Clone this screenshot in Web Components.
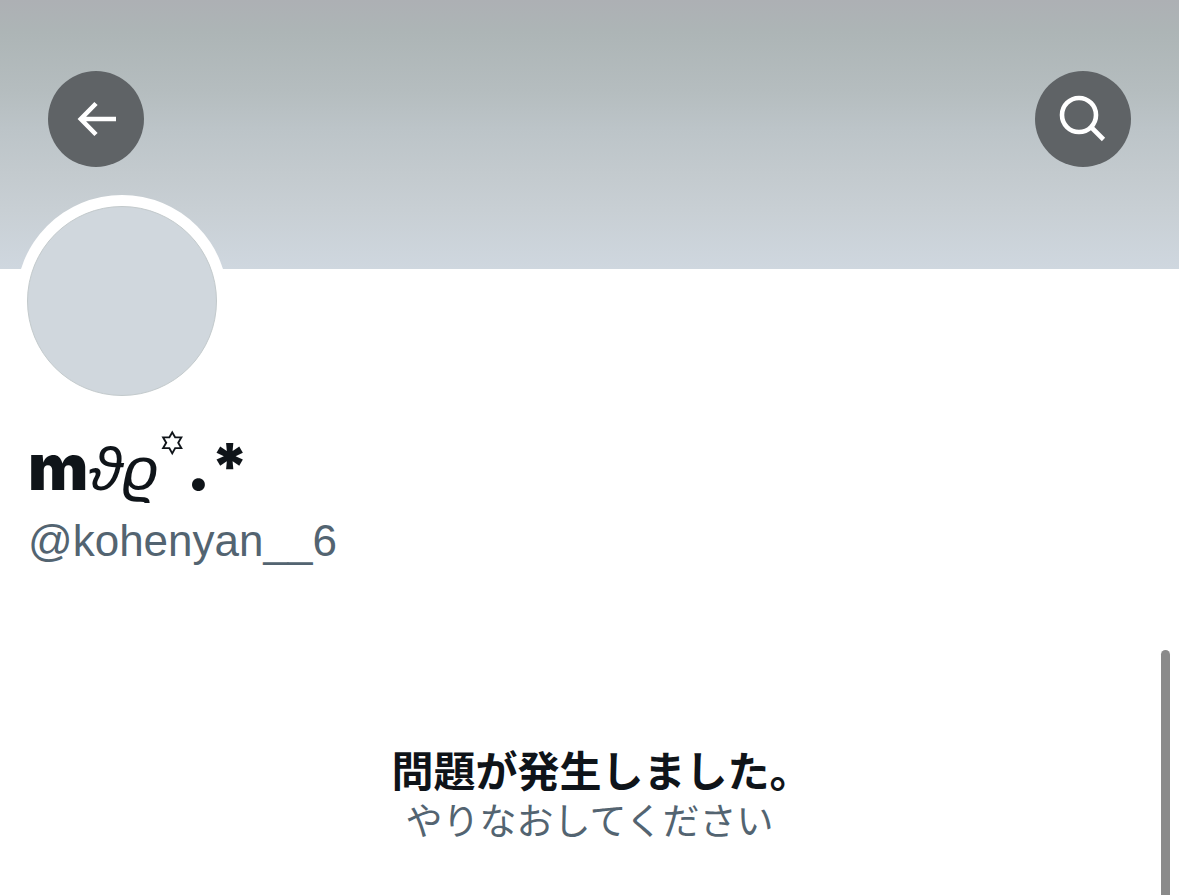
<!DOCTYPE html>
<html lang="ja">
<head>
<meta charset="utf-8">
<meta name="viewport" content="width=device-width, initial-scale=1">
<title>Profile</title>
<style>
  html {
    height: 100%;
  }
  body {
    margin: 0;
    height: 100%;
    overflow: hidden;
    background-color: #fff;
    color: #0f1419;
    font-family: Inter, "Noto Sans CJK JP", sans-serif;
  }
</style>
</head>
<body>
<profile-page></profile-page>

<script>
class IconButton extends HTMLElement {
  constructor () {
    super()
    this.shadowDOM = this.attachShadow({ mode: 'open' })
  }

  connectedCallback () {
    this.shadowDOM.innerHTML = `
      <style>
        :host {
          display: block;
        }
        button {
          display: flex;
          align-items: center;
          justify-content: center;
          width: 96px;
          height: 96px;
          padding: 0;
          border: 0;
          border-radius: 50%;
          background-color: #5f6366;
          color: #fff;
          cursor: pointer;
        }
      </style>
      <button type="button" aria-label="${this.getAttribute('label')}"><slot></slot></button>
    `
  }
}

customElements.define('icon-button', IconButton)

class ProfileBanner extends HTMLElement {
  constructor () {
    super()
    this.shadowDOM = this.attachShadow({ mode: 'open' })
  }

  connectedCallback () {
    this.shadowDOM.innerHTML = `
      <style>
        :host {
          display: flex;
          justify-content: space-between;
          align-items: flex-start;
          box-sizing: border-box;
          height: 269px;
          padding: 71px 48px 0;
          background: linear-gradient(#adb0b4, #adb5b6 12%, #b5bdbf 34%, #bcc4c8 48%, #c3cace 64%, #c8cfd4 78%, #cfd7df);
        }
        svg {
          display: block;
          fill: none;
          stroke: currentColor;
        }
      </style>
      <icon-button label="戻る">
        <svg width="60" height="60" viewBox="0 0 60 60" stroke-width="4.6">
          <path d="M50 30H15M30 14.5L14.8 30L30 45.5"/>
        </svg>
      </icon-button>
      <icon-button label="検索">
        <svg width="60" height="60" viewBox="0 0 60 60" stroke-width="4.6">
          <circle cx="26" cy="26" r="17"/>
          <path d="M38 38L50.5 50.5"/>
        </svg>
      </icon-button>
    `
  }
}

customElements.define('profile-banner', ProfileBanner)

class ProfileHeader extends HTMLElement {
  constructor () {
    super()
    this.shadowDOM = this.attachShadow({ mode: 'open' })
  }

  connectedCallback () {
    this.shadowDOM.innerHTML = `
      <style>
        :host {
          display: block;
          margin-top: -74px;
          padding: 0 16px;
        }
        .avatar {
          box-sizing: border-box;
          width: 212px;
          height: 212px;
          padding: 11px;
          border-radius: 50%;
          background-color: #fff;
        }
        .avatar > div {
          box-sizing: border-box;
          height: 100%;
          border: 1px solid #c3cacc;
          border-radius: 50%;
          background-color: #d0d7dd;
        }
        h1 {
          margin: 20px 0 0;
          padding-left: 12px;
          font-size: 64px;
          font-weight: 900;
          line-height: 80px;
        }
        .script {
          font-family: "Liberation Sans", sans-serif;
          font-size: 62px;
          font-style: italic;
          font-weight: 400;
          line-height: 1;
        }
        .star {
          font-size: 52px;
          font-weight: 400;
          line-height: 0;
          vertical-align: 20px;
        }
        p {
          margin: 8px 0 0;
          padding-left: 12px;
          color: #536471;
          font-family: "Liberation Sans", Arial, sans-serif;
          font-size: 44px;
          line-height: 52px;
        }
      </style>
      <div class="avatar"><div></div></div>
      <h1>m<span class="script">ϑϱ</span><span class="star">꙳</span>.*</h1>
      <p><slot name="handle"></slot></p>
    `
  }
}

customElements.define('profile-header', ProfileHeader)

class ErrorMessage extends HTMLElement {
  constructor () {
    super()
    this.shadowDOM = this.attachShadow({ mode: 'open' })
  }

  connectedCallback () {
    this.shadowDOM.innerHTML = `
      <style>
        :host {
          display: block;
          padding-top: 179px;
          text-align: center;
        }
        h2 {
          margin: 0;
          padding-left: 24px;
          font-size: 42px;
          font-weight: 700;
          line-height: 52px;
        }
        p {
          margin: 0;
          color: #536471;
          font-size: 37px;
          line-height: 48px;
        }
      </style>
      <h2><slot name="title"></slot></h2>
      <p><slot name="detail"></slot></p>
    `
  }
}

customElements.define('error-message', ErrorMessage)

class ProfilePage extends HTMLElement {
  constructor () {
    super()
    this.shadowDOM = this.attachShadow({ mode: 'open' })
  }

  connectedCallback () {
    this.shadowDOM.innerHTML = `
      <style>
        :host {
          display: block;
          position: relative;
          height: 100%;
        }
        .scrollbar {
          position: absolute;
          top: 650px;
          right: 9px;
          bottom: 0;
          width: 9px;
          border-radius: 5px 5px 0 0;
          background-color: #8a8a8a;
        }
      </style>
      <profile-banner></profile-banner>
      <profile-header>
        <span slot="handle">@kohenyan__6</span>
      </profile-header>
      <error-message>
        <span slot="title">問題が発生しました。</span>
        <span slot="detail">やりなおしてください</span>
      </error-message>
      <div class="scrollbar"></div>
    `
  }
}

customElements.define('profile-page', ProfilePage)
</script>
</body>
</html>
